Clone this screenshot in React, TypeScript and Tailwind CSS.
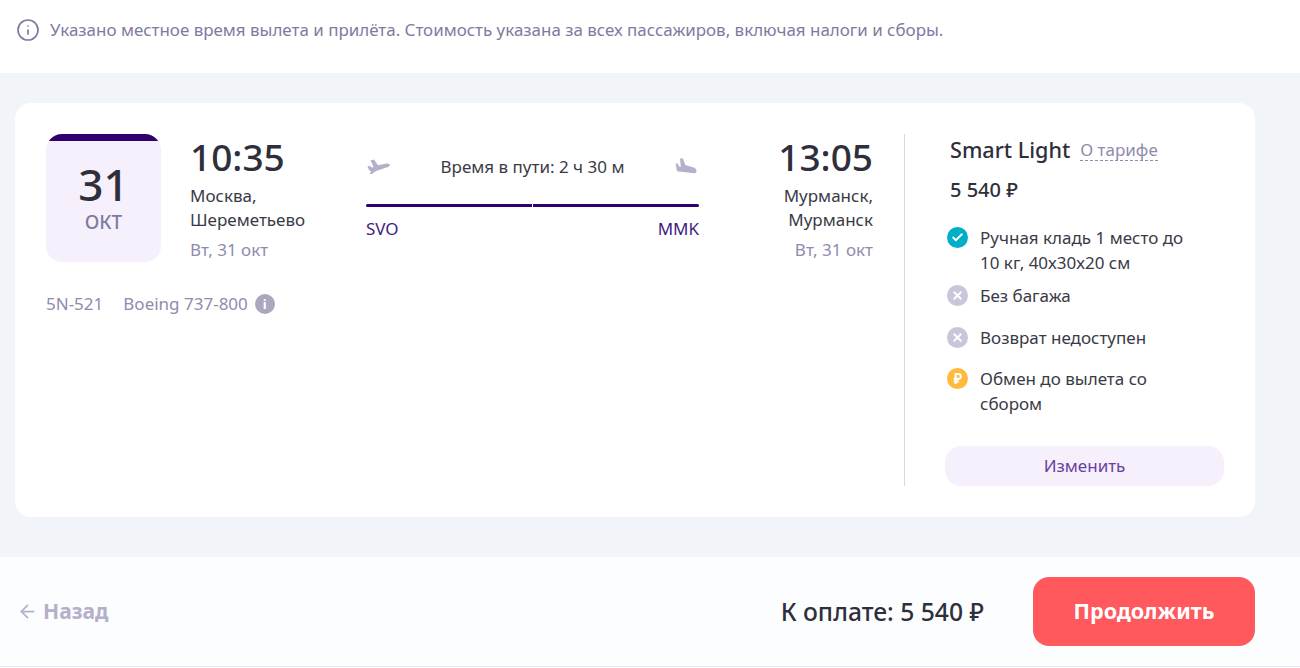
import React from 'react';
import { Check, X, ArrowLeft, Info } from 'lucide-react';

const PlaneUp = () => (
  <svg viewBox="0 0 24 18" className="w-6 h-[18px] text-[#b4b0ca]" fill="currentColor">
    <path d="M3.5 2.6 L7 1.6 L11 7.2 L19.6 5.6 C22.6 5.2 24 7.8 21.6 8.8 L8.5 13.2 L5 16 L2.6 16 L4.2 13.2 C3 13 2.4 12.4 1.8 11.4 L0.4 8.4 L2.6 7.8 L4.6 9.4 L6.6 9 Z" />
  </svg>
);

const PlaneDown = () => (
  <svg viewBox="0 0 24 18" className="w-6 h-[18px] text-[#b4b0ca]" fill="currentColor">
    <path d="M6 0.6 L9 0.6 L11.2 7 L19.6 9.4 C23 10.4 23.4 15 20.6 15.2 L5 13.6 C3.4 13.4 2.8 12.6 2.6 11.2 L1.6 5.6 L3.6 5.6 L5 8.4 L6.8 8.8 Z" />
  </svg>
);

const features = [
  { kind: 'ok', text: 'Ручная кладь 1 место до 10 кг, 40х30х20 см', gap: 'mb-[9px]' },
  { kind: 'no', text: 'Без багажа', gap: 'mb-[18px]' },
  { kind: 'no', text: 'Возврат недоступен', gap: 'mb-[17px]' },
  { kind: 'paid', text: 'Обмен до вылета со сбором', gap: '' },
];

const FeatureIcon = ({ kind }: { kind: string }) => {
  if (kind === 'ok') {
    return (
      <span className="w-[21px] h-[21px] mt-[1px] shrink-0 rounded-full bg-[#00aec7] flex items-center justify-center text-white">
        <Check className="w-[13px] h-[13px]" strokeWidth={3.5} />
      </span>
    );
  }
  if (kind === 'no') {
    return (
      <span className="w-[21px] h-[21px] mt-[1px] shrink-0 rounded-full bg-[#c8c6d8] flex items-center justify-center text-white">
        <X className="w-[13px] h-[13px]" strokeWidth={3.5} />
      </span>
    );
  }
  return (
    <span className="w-[21px] h-[21px] mt-[1px] shrink-0 rounded-full bg-[#ffb93b] flex items-center justify-center text-white">
      <svg viewBox="0 0 12 14" className="w-[11px] h-[13px]" fill="none" stroke="currentColor" strokeWidth="2.2">
        <path d="M4 13 V2 H7.2 C10.4 2 10.4 7.4 7.2 7.4 H1.8 M1.8 10.2 H7.6" />
      </svg>
    </span>
  );
};

export default function App() {
  return (
    <div className="w-[1300px] h-[668px] bg-white font-['Noto_Sans',sans-serif] text-[#2f2f3b] overflow-hidden">
      {/* Notice */}
      <div className="h-[73px] flex items-start pt-[19px] pl-[16px] text-[16.96px] leading-[22px] text-[#7f7aa0]">
        <Info className="w-[24px] h-[24px] -mt-[1px] mr-[10px] shrink-0" strokeWidth={1.7} />
        <span>Указано местное время вылета и прилёта. Стоимость указана за всех пассажиров, включая налоги и сборы.</span>
      </div>

      {/* Main */}
      <div className="h-[484px] bg-[#f1f5f9] pt-[30px] pl-[15px]">
        <div className="w-[1240px] h-[414px] bg-white rounded-2xl p-[31px] flex">
          <div className="w-[827px] shrink-0">
            <div className="flex">
              <div className="w-[115px] h-[128px] shrink-0 rounded-2xl overflow-hidden bg-[#f5f0fc] flex flex-col items-center">
                <div className="w-full h-[7px] shrink-0 bg-[#300070]" />
                <div className="text-[44px] leading-[50px] font-medium mt-[18px]">31</div>
                <div className="text-[19px] leading-[24px] mt-[1px] font-medium text-[#7f7aa0]">ОКТ</div>
              </div>

              <div className="w-[176px] shrink-0 ml-[29px]">
                <div className="text-[37px] leading-[46px] font-medium">10:35</div>
                <div className="text-[17px] leading-[24px] mt-[4px] w-[130px] text-[#3a3a46]">Москва, Шереметьево</div>
                <div className="text-[17px] leading-[24px] mt-[6px] text-[#8f8bad]">Вт, 31 окт</div>
              </div>

              <div className="w-[333px] shrink-0">
                <div className="flex items-center justify-between h-[66px] pl-[1px] pr-[1px]">
                  <PlaneUp />
                  <span className="text-[17px] leading-[22px] text-[#3a3a46]">Время в пути: 2 ч 30 м</span>
                  <PlaneDown />
                </div>
                <div className="flex h-[3px] mt-[4px] gap-px">
                  <div className="flex-1 bg-[#300070] rounded-l-sm" />
                  <div className="flex-1 bg-[#300070] rounded-r-sm" />
                </div>
                <div className="flex justify-between text-[17px] leading-[22px] text-[#3f1c80] mt-[11px]">
                  <span>SVO</span>
                  <span>MMK</span>
                </div>
              </div>

              <div className="flex-1 text-right">
                <div className="text-[37px] leading-[46px] font-medium">13:05</div>
                <div className="text-[17px] leading-[24px] mt-[4px] text-[#3a3a46]">Мурманск,<br />Мурманск</div>
                <div className="text-[17px] leading-[24px] mt-[6px] text-[#8f8bad]">Вт, 31 окт</div>
              </div>
            </div>

            <div className="flex items-center mt-[30px] text-[17px] leading-[24px] text-[#8f8bad]">
              <span>5N-521</span>
              <span className="ml-5">Boeing 737-800</span>
              <span className="ml-[7px] w-[20px] h-[20px] rounded-full bg-[#aaa7c0] text-white text-[13px] leading-[20px] font-bold text-center">i</span>
            </div>
          </div>

          <div className="ml-[31px] border-l border-[#d9d7e4] pl-[40px] w-[320px] h-[352px] flex flex-col">
            <div className="pl-[5px] flex items-center">
              <span className="text-[21.6px] leading-[32px] font-medium">Smart Light</span>
              <span className="ml-[10px] text-[17px] leading-[20px] text-[#8f8bad] border-b border-dashed border-[#8f8bad]">О тарифе</span>
            </div>
            <div className="pl-[5px] mt-[10px] text-[20px] leading-[28px] font-medium">5 540 ₽</div>
            <div className="mt-[22px] pl-[2px]">
              {features.map((f) => (
                <div key={f.text} className={`flex items-start ${f.gap}`}>
                  <FeatureIcon kind={f.kind} />
                  <span className="ml-3 text-[17px] leading-[25px] w-[220px] -mt-[1px] text-[#3a3a46]">{f.text}</span>
                </div>
              ))}
            </div>
            <button className="mt-auto w-[279px] h-[40px] rounded-2xl bg-[#f5f0fc] text-[#6a3fa0] text-[17px]">Изменить</button>
          </div>
        </div>
      </div>

      {/* Footer */}
      <div className="h-[110px] bg-[#fcfdff] border-b border-[#e8e8f6] flex items-center pl-[17px] pr-[45px]">
        <div className="flex items-center text-[#b4b0ca] text-[21px] font-bold">
          <ArrowLeft className="w-[21px] h-[21px] mr-[5px]" strokeWidth={2} />
          Назад
        </div>
        <div className="ml-auto text-[24.7px] font-medium">К оплате: 5 540 ₽</div>
        <button className="ml-[49px] w-[222px] h-[69px] rounded-2xl bg-[#ff585d] text-white text-[21.6px] font-bold">Продолжить</button>
      </div>
    </div>
  );
}
